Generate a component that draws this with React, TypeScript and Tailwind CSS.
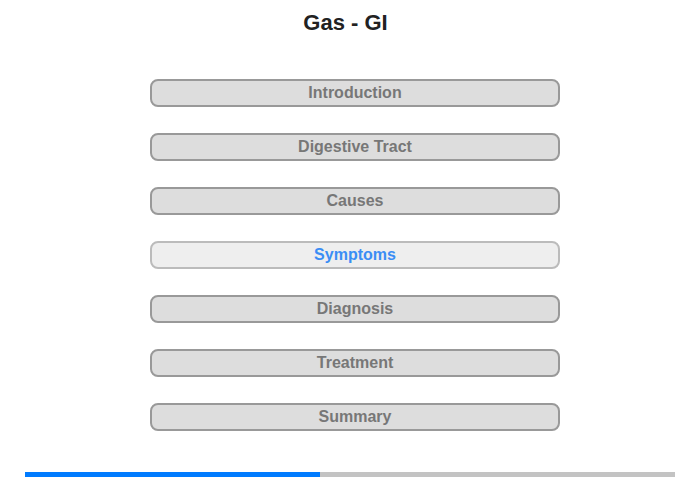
const items = ['Introduction', 'Digestive Tract', 'Causes', 'Symptoms', 'Diagnosis', 'Treatment', 'Summary'];
const active = 'Symptoms';

export default function App() {
  return (
    <div className="relative h-[480px] w-[700px] bg-white" style={{ fontFamily: '"Liberation Sans", Arial, sans-serif' }}>
      <h1 className="pr-[9px] pt-[9px] text-center text-[22px] font-bold leading-[28px] text-[#222]">Gas - GI</h1>
      <div className="mt-[42px] flex flex-col items-center gap-[26px] pl-[10px]">
        {items.map((item) => {
          const isActive = item === active;
          return (
            <button
              key={item}
              type="button"
              className={`h-[28px] w-[410px] rounded-[8px] border-2 text-[16px] font-bold leading-[24px] ${
                isActive
                  ? 'border-[#bbb] bg-[#eee] text-[#3b8df5]'
                  : 'border-[#999] bg-[#ddd] text-[#777]'
              }`}
            >
              {item}
            </button>
          );
        })}
      </div>
      <div className="absolute left-[25px] top-[472px] flex h-[5px] w-[650px] bg-[#c3c3c3]">
        <div className="h-full w-[295px] bg-[#007bff]" />
      </div>
    </div>
  );
}
